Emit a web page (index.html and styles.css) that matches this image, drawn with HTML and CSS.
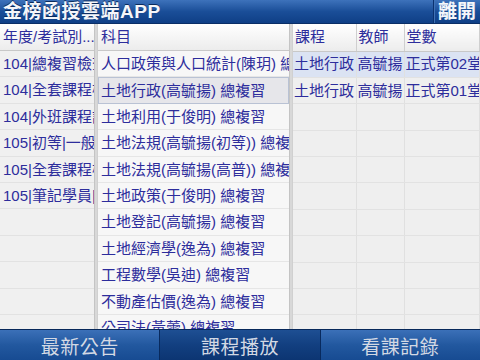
FILE: index.html
```html
<!DOCTYPE html>
<html lang="zh-Hant">
<head>
    <meta charset="UTF-8">
    <meta name="viewport" content="width=device-width, initial-scale=1.0">
    <title>金榜函授雲端APP</title>
    <link rel="stylesheet" href="styles.css">
</head>
<body>
<div class="app">
    <header class="topbar">
        <h1 class="title">金榜函授雲端APP</h1>
        <button class="exit">離開</button>
    </header>

    <main class="panes">
        <section class="pane pane-year">
            <div class="head">年度/考試別...</div>
            <ul class="list">
                <li>104|總複習檢查</li>
                <li>104|全套課程檢</li>
                <li>104|外班課程試</li>
                <li>105|初等|一般行</li>
                <li>105|全套課程檢</li>
                <li>105|筆記學員|筆</li>
                <li></li>
                <li></li>
                <li></li>
                <li></li>
                <li></li>
            </ul>
        </section>

        <section class="pane pane-subject">
            <div class="head">科目</div>
            <ul class="list">
                <li>人口政策與人口統計(陳玥) 總複習</li>
                <li class="selected">土地行政(高毓揚) 總複習</li>
                <li>土地利用(于俊明) 總複習</li>
                <li>土地法規(高毓揚(初等)) 總複習</li>
                <li>土地法規(高毓揚(高普)) 總複習</li>
                <li>土地政策(于俊明) 總複習</li>
                <li>土地登記(高毓揚) 總複習</li>
                <li>土地經濟學(逸為) 總複習</li>
                <li>工程數學(吳迪) 總複習</li>
                <li>不動產估價(逸為) 總複習</li>
                <li>公司法(黃蕾) 總複習</li>
            </ul>
        </section>

        <section class="pane pane-lesson">
            <table class="grid">
                <tr class="head-row">
                    <th class="c1">課程</th>
                    <th class="c2">教師</th>
                    <th class="c3">堂數</th>
                </tr>
                <tr class="active">
                    <td>土地行政</td><td>高毓揚</td><td>正式第02堂</td>
                </tr>
                <tr>
                    <td>土地行政</td><td>高毓揚</td><td>正式第01堂</td>
                </tr>
                <tr><td></td><td></td><td></td></tr>
                <tr><td></td><td></td><td></td></tr>
                <tr><td></td><td></td><td></td></tr>
                <tr><td></td><td></td><td></td></tr>
                <tr><td></td><td></td><td></td></tr>
                <tr><td></td><td></td><td></td></tr>
                <tr><td></td><td></td><td></td></tr>
                <tr><td></td><td></td><td></td></tr>
                <tr><td></td><td></td><td></td></tr>
            </table>
        </section>
    </main>

    <nav class="tabbar">
        <button class="tab">最新公告</button>
        <button class="tab current">課程播放</button>
        <button class="tab">看課記錄</button>
    </nav>
</div>
</body>
</html>
```

FILE: styles.css
```css
* {
    box-sizing: border-box;
}
body {
    margin: 0;
    font-family: "Liberation Sans", "Noto Sans CJK TC", sans-serif;
    background: #f0f0f0;
}
.app {
    width: 480px;
    height: 360px;
    display: flex;
    flex-direction: column;
    overflow: hidden;
}

/* top bar */
.topbar {
    height: 24px;
    display: flex;
    align-items: stretch;
    background: linear-gradient(#3d72bb, #1a4e98 50%, #0f3f86);
    border-bottom: 1px solid #0a2e66;
}
.title {
    flex: 1;
    margin: 0;
    padding-left: 3px;
    font-size: 19px;
    line-height: 23px;
    font-weight: bold;
    color: #f4f6fa;
    text-shadow: 0 -1px 0 #0a2a5c;
    letter-spacing: 0.5px;
}
.exit {
    width: 47px;
    border: 0;
    border-left: 1px solid #0b3270;
    box-shadow: inset 1px 0 0 #3f72b6;
    background: transparent;
    font: bold 19px "Liberation Sans", "Noto Sans CJK TC", sans-serif;
    line-height: 23px;
    color: #f4f6fa;
    padding: 0;
    text-align: center;
}

/* panes */
.panes {
    flex: 1;
    display: flex;
    min-height: 0;
    background: #d8d8d8;
}
.pane {
    overflow: hidden;
    color: #2d2d9c;
    font-size: 15px;
}
.pane-year {
    width: 95px;
    background: #f0f0f0;
    border-right: 1px solid #c4c4c4;
}
.pane-subject {
    width: 193px;
    margin-left: 2px;
    background: #f7f7f7;
    border-left: 1px solid #d0d0d0;
    border-right: 1px solid #c4c4c4;
}
.pane-lesson {
    flex: 1;
    margin-left: 2px;
    background: #efefef;
    border-left: 1px solid #d0d0d0;
}
.head {
    height: 27px;
    line-height: 26px;
    padding-left: 3px;
    white-space: nowrap;
    background: linear-gradient(#ffffff, #ececec);
    border-bottom: 1px solid #c8c8c8;
}
.list {
    list-style: none;
    margin: 0;
    padding: 0;
}
.list li {
    height: 26.4px;
    line-height: 25px;
    padding-left: 3px;
    white-space: nowrap;
    overflow: hidden;
    border-bottom: 1px solid #e2e2e2;
}
.pane-subject .list li {
    border-bottom-color: #e6e6e6;
}
.list li.selected {
    background: #e6e6ea;
    border: 1px solid #b9c2d4;
    padding-left: 2px;
}

/* lesson table */
.grid {
    width: 100%;
    border-collapse: collapse;
    table-layout: fixed;
}
.grid th, .grid td {
    height: 26.4px;
    padding: 0 0 0 1px;
    text-align: left;
    font-weight: normal;
    white-space: nowrap;
    overflow: hidden;
    border-right: 1px solid #e0e0e0;
    border-bottom: 1px solid #e2e2e2;
    line-height: 24px;
}
.grid .head-row th {
    height: 27px;
    padding-left: 2px;
    background: linear-gradient(#ffffff, #ececec);
    border-right: 1px solid #cfcfcf;
    border-bottom: 1px solid #c8c8c8;
}
.grid .c1 { width: 63px; }
.grid .c2 { width: 48px; }
.grid tr.active td {
    background: #dbe3f3;
}

/* bottom tabs */
.tabbar {
    height: 31px;
    display: flex;
    background: #0c3572;
    border-top: 1px solid #07285a;
}
.tab {
    flex: 1;
    border: 0;
    border-left: 1px solid #082a5e;
    padding: 0;
    background: linear-gradient(#3b70b8, #22589f 50%, #174b92);
    font: 19px "Liberation Sans", "Noto Sans CJK TC", sans-serif;
    color: #d3d9e4;
    letter-spacing: 0.5px;
}
.tab:first-child {
    border-left: 0;
}
.tab.current {
    background: linear-gradient(#1e4f93, #123f80 50%, #0c3572);
}
```
